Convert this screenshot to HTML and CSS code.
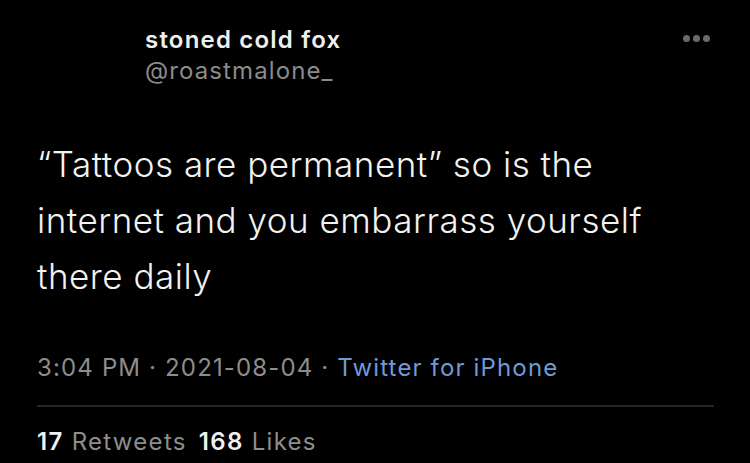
FILE: index.html
```html
<!DOCTYPE html>
<html lang="en">
<head>
  <meta charset="UTF-8">
  <meta name="viewport" content="width=device-width, initial-scale=1.0">
  <title>stoned cold fox</title>
  <link rel="stylesheet" href="styles.css">
</head>
<body>
  <div class="tweet">
    <div class="tweet-header">
      <div class="author">
        <div class="author-name">stoned cold fox</div>
        <div class="author-handle">@roastmalone_</div>
      </div>
      <div class="more-icon">
        <span></span><span></span><span></span>
      </div>
    </div>

    <p class="tweet-text">“Tattoos are permanent” so is the internet and you embarrass yourself there daily</p>

    <div class="tweet-meta">3:04 PM · 2021-08-04 · <span class="source">Twitter for iPhone</span></div>

    <div class="tweet-stats">
      <span class="count">17</span> Retweets <span class="count stat-gap">168</span> Likes
    </div>
  </div>
</body>
</html>
```

FILE: styles.css
```css
* {
  margin: 0;
  padding: 0;
  box-sizing: border-box;
}

body {
  background: #000;
  color: #ececec;
  font-family: 'Inter', 'Roboto', sans-serif;
  width: 750px;
  height: 463px;
  overflow: hidden;
}

.tweet {
  padding: 0 36px 0 37px;
}

.tweet-header {
  display: flex;
  justify-content: space-between;
  align-items: flex-start;
  padding-left: 108px;
  padding-top: 26px;
}

.author-name {
  font-size: 24px;
  font-weight: 600;
  line-height: 28px;
  letter-spacing: 1.2px;
  color: #efefef;
}

.author-handle {
  font-size: 24px;
  line-height: 30px;
  letter-spacing: 1.1px;
  color: #8b8b8b;
  margin-top: 2px;
}

.more-icon {
  display: flex;
  gap: 3px;
  margin-top: 9px;
  margin-right: 4px;
}

.more-icon span {
  width: 7px;
  height: 7px;
  border-radius: 50%;
  background: #6a6a6a;
}

.tweet-text {
  font-size: 35px;
  line-height: 56px;
  font-weight: 300;
  letter-spacing: 0.5px;
  color: #f2f2f2;
  margin-top: 50px;
  max-width: 640px;
}

.tweet-meta {
  font-size: 24px;
  line-height: 30px;
  letter-spacing: 1.15px;
  color: #8d8d8d;
  margin-top: 49px;
  padding-bottom: 22px;
  border-bottom: 2px solid #262626;
}

.source {
  color: #6f9ad6;
}

.tweet-stats {
  font-size: 24px;
  line-height: 30px;
  letter-spacing: 1.3px;
  color: #8d8d8d;
  padding-top: 20px;
}

.count {
  color: #f0f0f0;
  font-weight: 600;
}

.stat-gap {
  margin-left: 4px;
}
```
